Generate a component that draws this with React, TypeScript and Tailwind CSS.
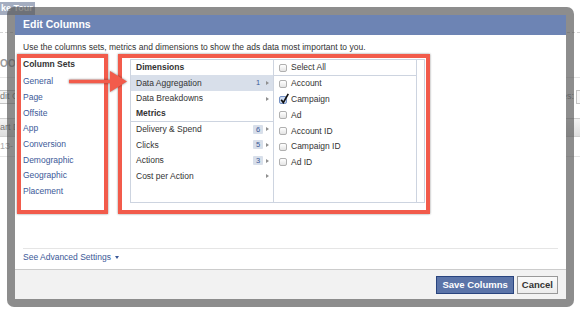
import React from 'react'

const columnSets = ['General', 'Page', 'Offsite', 'App', 'Conversion', 'Demographic', 'Geographic', 'Placement']

const fields = [
  { label: 'Account', checked: false },
  { label: 'Campaign', checked: true },
  { label: 'Ad', checked: false },
  { label: 'Account ID', checked: false },
  { label: 'Campaign ID', checked: false },
  { label: 'Ad ID', checked: false },
]

const metrics = [
  { label: 'Delivery & Spend', count: 6 },
  { label: 'Clicks', count: 5 },
  { label: 'Actions', count: 3 },
  { label: 'Cost per Action' },
]

function Caret() {
  return <span className="inline-block h-0 w-0 border-y-[2.5px] border-l-[3px] border-y-transparent border-l-[#8f8f8f]" />
}

function Badge({ count, plain }: { count: number; plain?: boolean }) {
  return (
    <span
      className={`flex h-[9px] min-w-[10px] items-center justify-center rounded-[1px] px-[2px] text-[7.5px] leading-none text-[#3b5998] ${
        plain ? '' : 'bg-[#d8dfea]'
      }`}
    >
      {count}
    </span>
  )
}

function Checkbox({ checked }: { checked?: boolean }) {
  return (
    <span
      className={`relative inline-block h-[8px] w-[8px] shrink-0 rounded-[2px] border ${
        checked ? 'border-[#7591c4] bg-[#cddcf3]' : 'border-[#b0b0b0] bg-linear-to-b from-white to-[#e4e4e4]'
      }`}
    >
      {checked && (
        <svg className="absolute -top-[4px] left-0 h-[11px] w-[9px]" viewBox="0 0 9 11">
          <path d="M1.2 6.8 L3.3 9.6 L8.3 0.8" fill="none" stroke="#111" strokeWidth="1.7" />
        </svg>
      )}
    </span>
  )
}

export default function App() {
  return (
    <div className="relative h-[315px] w-[580px] overflow-hidden bg-white font-['Liberation_Sans',Arial,sans-serif] text-[#333]">
      {/* page behind the dialog, only its edges show */}
      <div className="flex flex-col text-[9px] text-[#8a8a8a]">
        <div className="flex h-[16px] items-start pt-[2px]">
          <span className="flex h-[13px] w-[35px] items-center bg-[#a4adc0] pl-[1px] text-[9px] font-bold text-white">ke Tour</span>
        </div>
        <div className="mt-[16px] border-b border-dashed border-[#d4d4d4]" />
        <div className="mt-[24px] flex h-[12px] items-center">
          <span className="text-[10px] font-bold tracking-wide text-[#9a9a9a]">OOI</span>
        </div>
        <div className="mt-[8px] border-b border-[#e6e6e6]" />
        <div className="mt-[12px] flex h-[14px] items-center justify-between">
          <span className="flex h-[14px] w-[24px] items-center border-y border-r border-[#c4c4c4] bg-[#f4f4f4] text-[#777]">dit C</span>
          <span className="flex items-center gap-[2px]">
            <span className="text-[#888]">es:</span>
            <span className="h-[14px] w-[4px] border-y border-l border-[#c4c4c4] bg-[#f7f7f7]" />
          </span>
        </div>
        <div className="mt-[14px] flex h-[19px] items-center border-y border-[#d0d0d0] bg-linear-to-b from-[#f4f4f4] to-[#dedede] text-[#777]">
          <span>art D</span>
        </div>
        <div className="flex h-[20px] items-center border-b border-[#e6e6e6]">
          <span className="text-[#aaa]">13-</span>
        </div>
      </div>

      {/* dialog */}
      <div className="absolute left-[7px] top-[7px] h-[300px] w-[567px] rounded-[7px] bg-[rgba(82,82,82,0.66)] p-[8px]">
        <div className="flex h-full flex-col bg-white">
          <div className="flex h-[20px] shrink-0 items-center bg-[#6d84b4] pl-[8px] text-[10.5px] font-bold text-white">
            Edit Columns
          </div>

          <div className="flex flex-1 flex-col px-[8px] text-[8.5px]">
            <p className="pt-[6px] leading-[12px]">
              Use the columns sets, metrics and dimensions to show the ads data most important to you.
            </p>

            <div className="mt-[4px] flex items-start">
              <div className="flex w-[107px] flex-col">
                <div className="flex h-[15px] items-center font-bold">Column Sets</div>
                <div className="mt-[2px] flex flex-col">
                  {columnSets.map((s) => (
                    <a key={s} className="flex h-[15.66px] items-center text-[#3b5998]">
                      {s}
                    </a>
                  ))}
                </div>
              </div>

              <div className="mt-[2px] flex h-[144px] w-[295px] border border-[#cdd4e0]">
                <div className="flex w-[143px] flex-col border-r border-[#cdd4e0]">
                  <div className="flex h-[15px] items-center pl-[5px] font-bold">Dimensions</div>
                  <div className="flex h-[16px] items-center bg-[#d8dfea] pl-[5px] pr-[4px]">
                    Data Aggregation
                    <span className="ml-auto flex items-center gap-[3px]">
                      <Badge count={1} plain />
                      <Caret />
                    </span>
                  </div>
                  <div className="flex h-[15.6px] items-center pl-[5px] pr-[4px]">
                    Data Breakdowns
                    <span className="ml-auto flex items-center">
                      <Caret />
                    </span>
                  </div>
                  <div className="flex h-[15px] items-center border-b border-[#cdd4e0] pl-[5px] font-bold">Metrics</div>
                  {metrics.map((m) => (
                    <div key={m.label} className="flex h-[15.6px] items-center pl-[5px] pr-[4px]">
                      {m.label}
                      <span className="ml-auto flex items-center gap-[3px]">
                        {m.count !== undefined && <Badge count={m.count} />}
                        <Caret />
                      </span>
                    </div>
                  ))}
                </div>

                <div className="flex w-[143px] flex-col border-r border-[#cdd4e0]">
                  <div className="flex h-[16px] items-center gap-[4px] border-b border-[#cdd4e0] pl-[5px]">
                    <Checkbox />
                    Select All
                  </div>
                  {fields.map((f) => (
                    <div key={f.label} className="flex h-[15.7px] items-center gap-[4px] pl-[5px]">
                      <Checkbox checked={f.checked} />
                      {f.label}
                    </div>
                  ))}
                </div>

                <div className="flex-1" />
              </div>
            </div>

            <div className="mt-auto mb-[4px] flex h-[17px] items-center border-t border-[#e5e5e5] text-[#3b5998]">
              See Advanced Settings
              <span className="ml-[4px] inline-block h-0 w-0 border-x-[2px] border-t-[3px] border-x-transparent border-t-[#3b5998]" />
            </div>
          </div>

          <div className="flex h-[30px] shrink-0 items-start justify-end gap-[3px] border-t border-[#cccccc] bg-[#f2f2f2] pr-[8px] pt-[6px] text-[9.5px] font-bold">
            <button className="flex h-[18px] items-center border border-[#29447e] bg-[#5b74a8] px-[5px] text-white">
              Save Columns
            </button>
            <button className="flex h-[18px] items-center border border-[#999] bg-linear-to-b from-[#fafafa] to-[#ececec] px-[4px] text-[#333]">
              Cancel
            </button>
          </div>
        </div>
      </div>

      {/* annotation overlay */}
      <div className="pointer-events-none absolute left-[17px] top-[54px] h-[160px] w-[91px] border-[4px] border-[#f25b4b] shadow-[0_0_2px_rgba(0,0,0,0.45)]" />
      <div className="pointer-events-none absolute left-[118px] top-[54px] h-[160px] w-[312px] border-[4px] border-[#f25b4b] shadow-[0_0_2px_rgba(0,0,0,0.45)]" />
      <svg
        className="pointer-events-none absolute left-[66px] top-[68px] h-[28px] w-[66px] drop-shadow-[0_0_1px_rgba(0,0,0,0.5)]"
        viewBox="0 0 66 28"
      >
        <line x1="3" y1="13.5" x2="46" y2="13.5" stroke="#f25b4b" strokeWidth="3.5" />
        <polygon points="44,3 61,13.5 44,24" fill="#f25b4b" />
      </svg>
    </div>
  )
}
